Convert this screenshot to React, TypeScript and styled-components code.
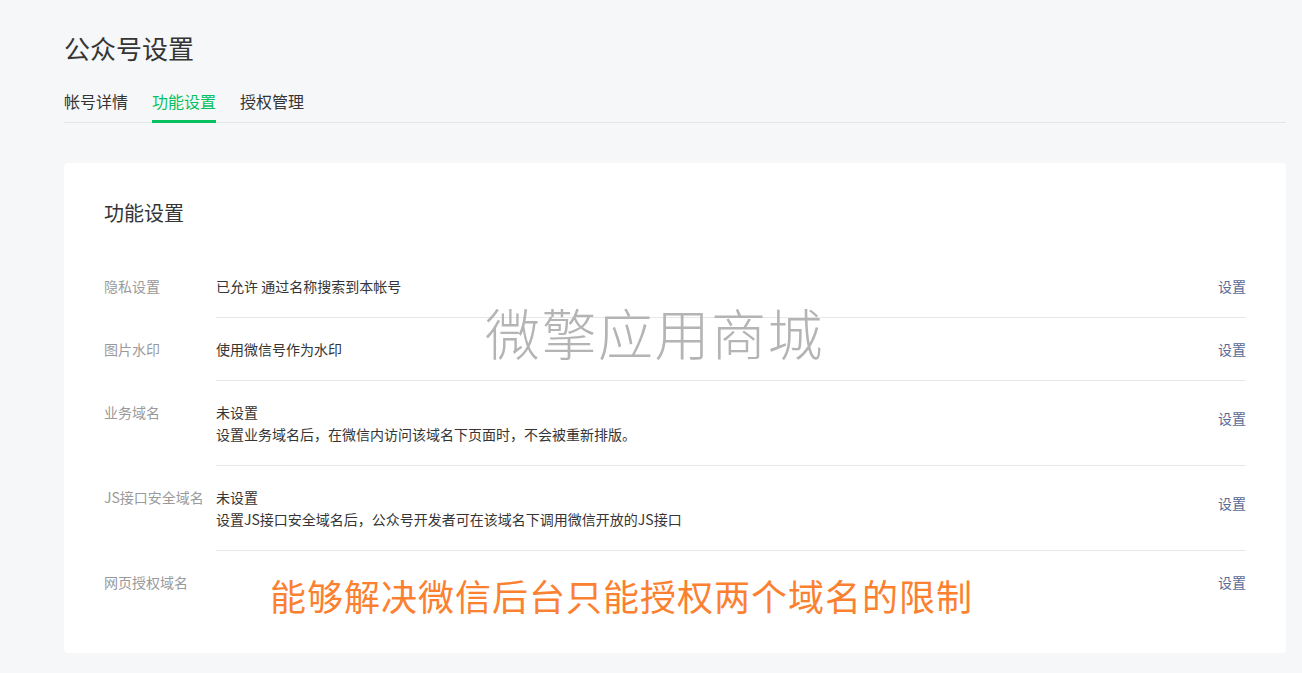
import React, { ReactElement, useState } from 'react';
import styled, { createGlobalStyle } from 'styled-components';

const GlobalStyle = createGlobalStyle`
  html, body {
    margin: 0;
    padding: 0;
    background: #f6f7f9;
    font-family: "Noto Sans CJK SC", "Noto Sans", sans-serif;
    color: #353535;
  }
  * {
    box-sizing: border-box;
  }
`;

const Page = styled.div`
  padding: 30px 16px 20px 64px;
  min-height: 673px;
`;

const PageTitle = styled.h1`
  margin: 0;
  font-size: 26px;
  line-height: 36px;
  font-weight: 400;
  color: #353535;
`;

const TabBar = styled.div`
  display: flex;
  gap: 24px;
  margin-top: 24px;
  border-bottom: 1px solid #e4e6ea;
`;

const Tab = styled.div<{ $active?: boolean }>`
  font-size: 16px;
  line-height: 22px;
  padding-bottom: 8px;
  margin-bottom: -1px;
  color: ${(p) => (p.$active ? '#07c160' : '#353535')};
  border-bottom: 3px solid ${(p) => (p.$active ? '#07c160' : 'transparent')};
  cursor: pointer;
`;

const Card = styled.div`
  position: relative;
  margin-top: 40px;
  background: #fff;
  border-radius: 4px;
  padding: 36px 40px 39px;
`;

const CardTitle = styled.h2`
  margin: 0 0 28px;
  font-size: 20px;
  line-height: 28px;
  font-weight: 400;
  color: #353535;
`;

const Row = styled.div`
  display: flex;
  font-size: 14px;
  line-height: 22px;
`;

const Label = styled.div`
  width: 112px;
  flex-shrink: 0;
  padding-top: 20px;
  color: #9a9a9a;
  white-space: nowrap;
`;

const Body = styled.div<{ $last?: boolean }>`
  flex: 1;
  display: flex;
  align-items: center;
  justify-content: space-between;
  padding: 20px 0;
  border-bottom: 1px solid ${(p) => (p.$last ? 'transparent' : '#e7e7e7')};
`;

const Info = styled.div`
  color: #353535;
`;

// multi-line rows put the link a little above the middle
const Link = styled.a<{ $raised?: boolean }>`
  color: #576b95;
  text-decoration: none;
  cursor: pointer;
  margin-bottom: ${(p) => (p.$raised ? '11px' : '0')};
`;

const Watermark = styled.div`
  position: absolute;
  left: 421px;
  top: 136px;
  font-size: 55px;
  line-height: 64px;
  letter-spacing: 1.5px;
  font-weight: 300;
  color: #b4b4b4;
  pointer-events: none;
  white-space: nowrap;
`;

const Promo = styled.div`
  position: absolute;
  left: 206px;
  top: 410px;
  font-size: 36px;
  line-height: 44px;
  letter-spacing: 1px;
  color: #fb8130;
  pointer-events: none;
  white-space: nowrap;
`;

interface Setting {
  label: string;
  lines: string[];
}

const SETTINGS: Setting[] = [
  { label: '隐私设置', lines: ['已允许 通过名称搜索到本帐号'] },
  { label: '图片水印', lines: ['使用微信号作为水印'] },
  {
    label: '业务域名',
    lines: ['未设置', '设置业务域名后，在微信内访问该域名下页面时，不会被重新排版。'],
  },
  {
    label: 'JS接口安全域名',
    lines: ['未设置', '设置JS接口安全域名后，公众号开发者可在该域名下调用微信开放的JS接口'],
  },
  { label: '网页授权域名', lines: [] },
];

const TABS = ['帐号详情', '功能设置', '授权管理'];

export default function App(): ReactElement {
  const [tab, setTab] = useState<number>(1);

  return (
    <>
      <GlobalStyle />
      <Page>
        <PageTitle>公众号设置</PageTitle>
        <TabBar>
          {TABS.map((name, i) => (
            <Tab key={name} $active={i === tab} onClick={() => setTab(i)}>
              {name}
            </Tab>
          ))}
        </TabBar>
        <Card>
          <CardTitle>功能设置</CardTitle>
          {SETTINGS.map((s, i) => (
            <Row key={s.label}>
              <Label>{s.label}</Label>
              <Body $last={i === SETTINGS.length - 1}>
                <Info>
                  {s.lines.length ? (
                    s.lines.map((line) => <div key={line}>{line}</div>)
                  ) : (
                    <div>&nbsp;</div>
                  )}
                </Info>
                <Link $raised={s.lines.length > 1}>设置</Link>
              </Body>
            </Row>
          ))}
          <Watermark>微擎应用商城</Watermark>
          <Promo>能够解决微信后台只能授权两个域名的限制</Promo>
        </Card>
      </Page>
    </>
  );
}
